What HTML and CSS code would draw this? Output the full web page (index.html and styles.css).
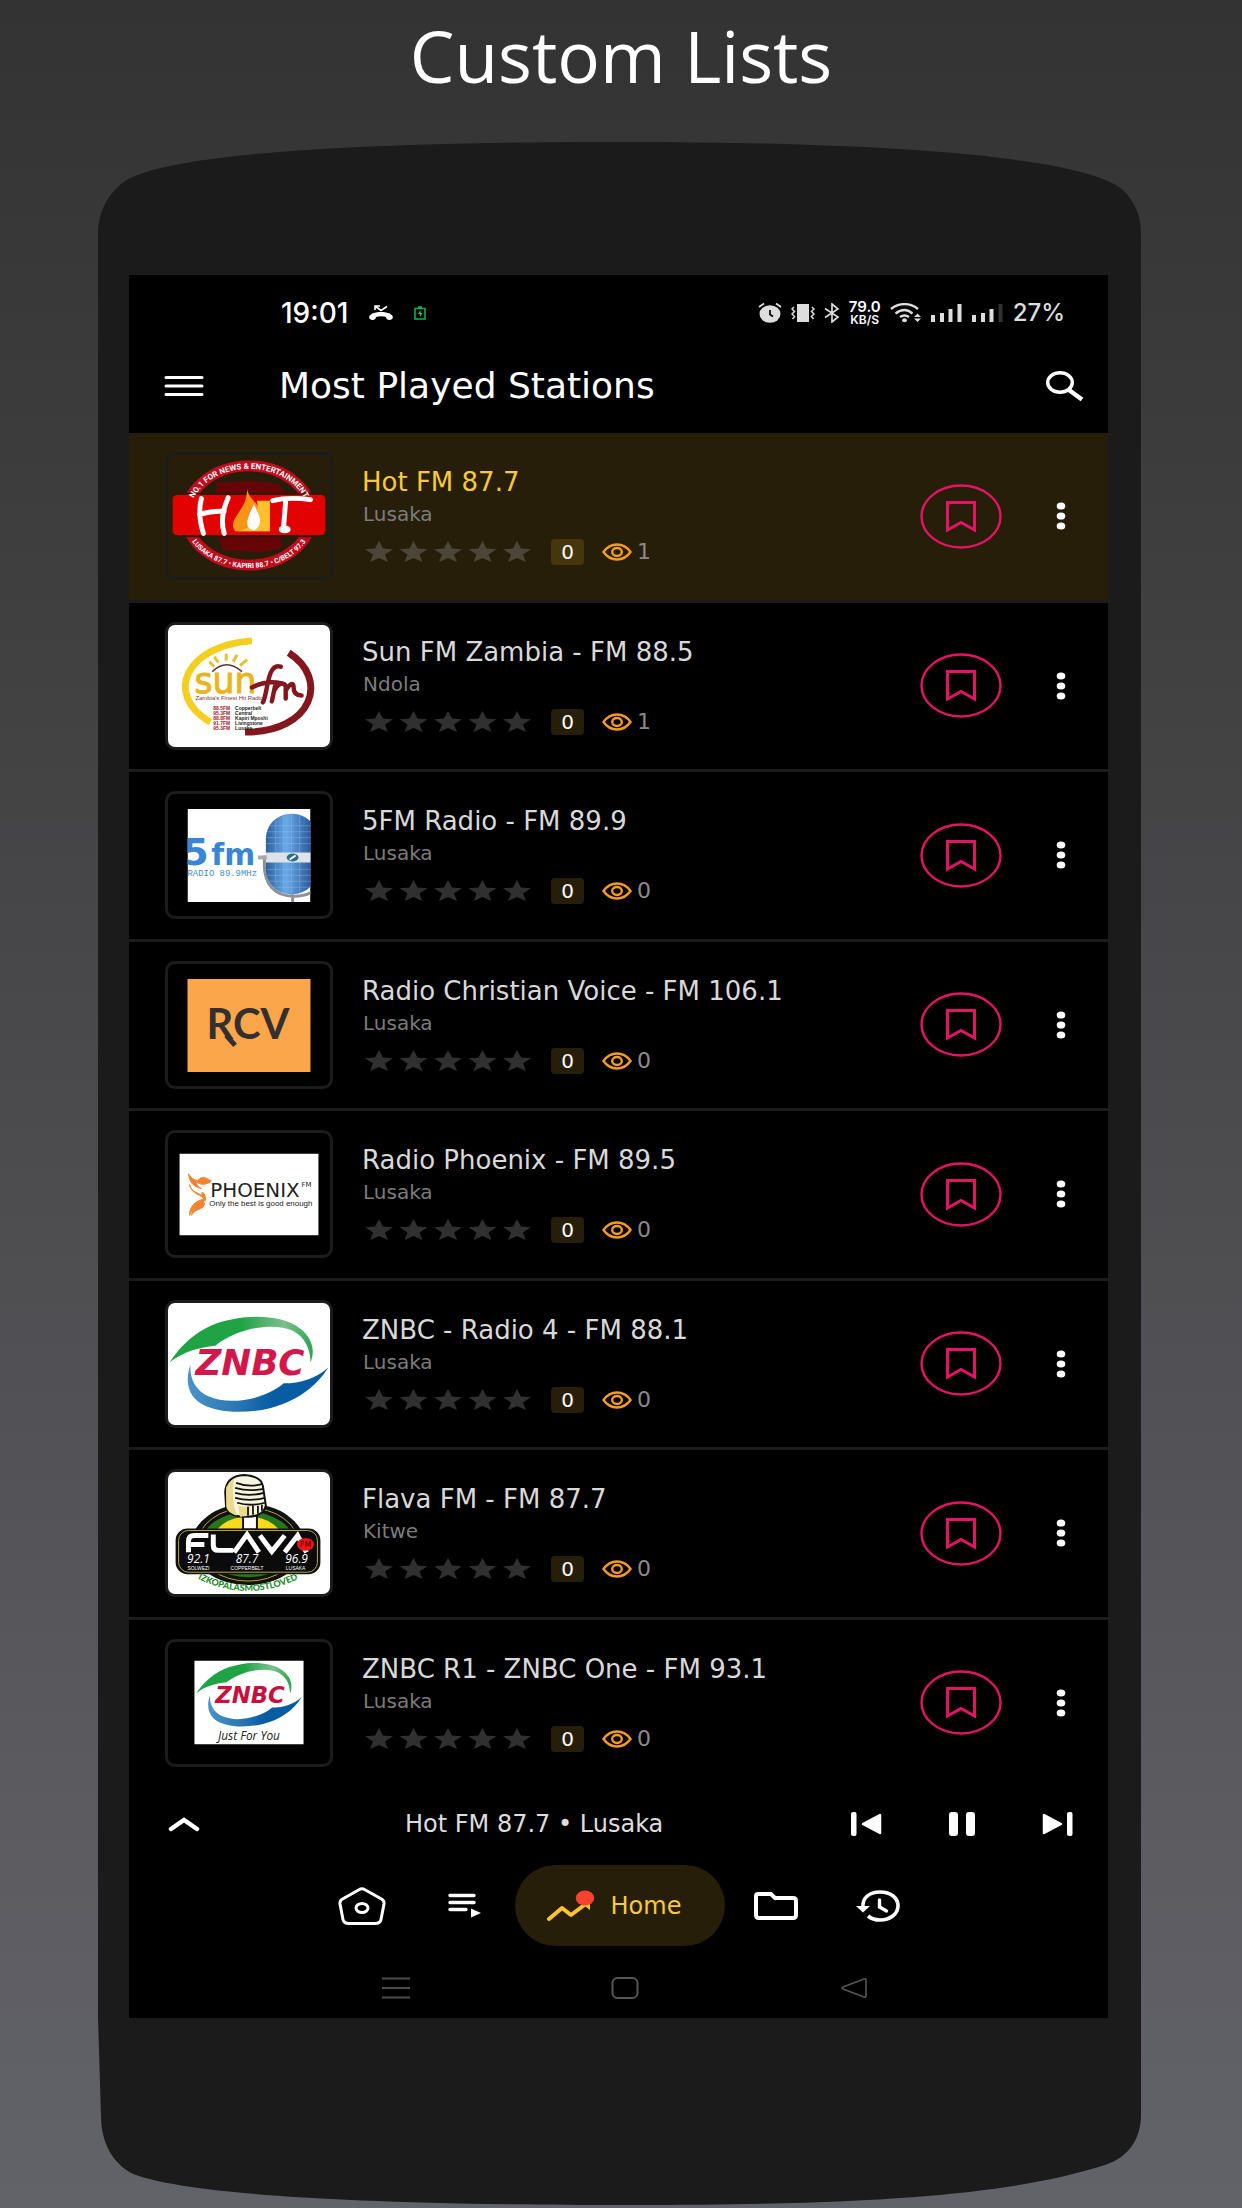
FILE: index.html
```html
<!DOCTYPE html>
<html lang="en">
<head>
<meta charset="utf-8">
<meta name="viewport" content="width=device-width, initial-scale=1">
<title>Custom Lists</title>
<link rel="stylesheet" href="styles.css">
</head>
<body>
<svg class="defs" aria-hidden="true">
  <defs>
    <linearGradient id="leaf"><stop offset=".5" stop-color="#1fa345"/><stop offset=".8" stop-color="#7cc08d"/><stop offset="1" stop-color="#2ca551"/></linearGradient>
    <linearGradient id="wave"><stop offset="0" stop-color="#4b93c8"/><stop offset=".35" stop-color="#2a77b4"/><stop offset=".6" stop-color="#075ca4"/></linearGradient>
  </defs>
  <symbol id="stars" viewBox="0 0 166 22">
    <g fill="currentColor">
      <path id="star" d="M14 0l4 7.500 10 .8-8 5.200 3 7.500-9-4-9 4 3-7.500-8-5.200 10-.8z"/>
      <use href="#star" x="34.500"/><use href="#star" x="69"/><use href="#star" x="103.500"/><use href="#star" x="138"/>
    </g>
  </symbol>
  <symbol id="eye" viewBox="0 0 30 18">
    <g fill="none" stroke="currentColor" stroke-width="2.400">
      <path d="M1.500 9C5 4 9.500 1.500 15 1.500S25 4 28.500 9C25 14 20.500 16.500 15 16.500S5 14 1.500 9z"/>
      <ellipse cx="15" cy="9" rx="4.800" ry="4"/>
    </g>
  </symbol>
  <symbol id="bookmark" viewBox="0 0 82 65">
    <g fill="none" stroke="currentColor" stroke-width="2.400">
      <ellipse cx="41" cy="32.500" rx="39.500" ry="31"/>
      <path d="M27.500 18.500h27v27.500L41 38.500 27.500 46z" stroke-width="3"/>
    </g>
  </symbol>
  <symbol id="more" viewBox="0 0 10 28">
    <g fill="currentColor"><ellipse cx="5" cy="4" rx="4.300" ry="3.600"/><ellipse cx="5" cy="14" rx="4.300" ry="3.600"/><ellipse cx="5" cy="24" rx="4.300" ry="3.600"/></g>
  </symbol>
  <symbol id="swoosh" viewBox="0 0 162 123">
    <path fill="url(#leaf)" d="M1 60C16 37 36 22 62 17 88 11 116 14 130 24 145 34 148 48 143 60 143 46 137 34 125 28 106 19 70 25 47 43 30 45 14 49 1 60z"/>
    <path fill="url(#wave)" d="M161 65C148 86 126 100 102 106 77 112 48 111 32 101 18 92 17 76 22 62 21 76 27 88 40 94 62 104 97 97 116 81 133 81 149 76 161 65z"/>
  </symbol>
</svg>

<main class="promo">
  <h1 class="headline">Custom Lists</h1>

  <div class="phone">
    <svg class="cap" viewBox="0 0 1043 133" preserveAspectRatio="none" aria-hidden="true">
      <path d="M0 134V92C0 72 8 55 22 43 38 28 105 0 522 0s488 34 503 48c12 12 18 26 18 44v42z" fill="#1b1b1b"/>
    </svg>

    <div class="screen">
      <div class="status">
        <div class="status-left">
          <span class="clock">19:01</span>
          <svg width="26" height="16" viewBox="0 0 26 16"><path d="M2 14C-1 11 4 7 13 7s14 4 11 7c-2 2-6 1-6-2-3-1-7-1-10 0 0 3-4 4-6 2z" fill="#fff"/><path d="M7 5V1h5M7 1l6 4.500 6-4" fill="none" stroke="#fff" stroke-width="1.600"/></svg>
          <svg width="12" height="14" viewBox="0 0 12 14"><path d="M1 2.500h10v10.500H1zM4 1h4" fill="none" stroke="#16b34c" stroke-width="1.500"/><path d="M6.500 4L4 8h2v3l2.500-4h-2z" fill="#25d162"/></svg>
        </div>
        <div class="status-right">
          <svg width="24" height="20" viewBox="0 0 24 20"><ellipse cx="12" cy="11" rx="10.500" ry="8.700" fill="#ddd"/><path d="M1 4l5-3.500M23 4l-5-3.500" stroke="#ddd" stroke-width="1.800"/><path d="M12 7v4.500l3 2" fill="none" stroke="#000" stroke-width="1.700"/></svg>
          <svg width="24" height="18" viewBox="0 0 24 18"><path d="M6 0h12v18H6z" fill="#ddd"/><path d="M3 3L1 5l2.500 2.500L1 10l2.500 2.500L1.500 15M21 3l2 2-2.500 2.500L23 10l-2.500 2.500 2 2.500" fill="none" stroke="#ddd" stroke-width="1.500"/></svg>
          <svg width="16" height="20" viewBox="0 0 16 20"><path d="M1 5.500l13 8.500-6 5V1l6 5L1 14.500" fill="none" stroke="#ddd" stroke-width="1.700"/></svg>
          <span class="speed"><span>79.0</span><span class="unit">KB/S</span></span>
          <svg width="32" height="20" viewBox="0 0 32 20"><path d="M1 6C9-.5 20-.5 28 6M5.500 10.500c6-4.500 12-4.500 17 0M10 14c3-2 6-2 9 0" fill="none" stroke="#ddd" stroke-width="2.400"/><ellipse cx="14.500" cy="17.200" rx="2.400" ry="2" fill="#ddd"/><path d="M24 14l3.500-3.500L31 14zM24 15.500h7L27.500 19z" fill="#ddd"/></svg>
          <svg width="32" height="18" viewBox="0 0 32 18"><path d="M0 11h4v7H0zM9 9h4v9H9zM17.500 5h4v13h-4zM26.500 0h4v18h-4z" fill="#ddd"/></svg>
          <svg width="32" height="18" viewBox="0 0 32 18"><path d="M0 11h4v7H0zM9 9h4v9H9zM17.500 5h4v13h-4z" fill="#ddd"/><path d="M26.500 0h4v18h-4z" fill="#333"/></svg>
          <span class="battery">27%</span>
        </div>
      </div>

      <header class="appbar">
        <button class="icon-btn" type="button" aria-label="Menu"><svg width="40" height="22" viewBox="0 0 40 22"><path d="M2 2.500h36M2 11h36M2 19.500h36" stroke="#fff" stroke-width="3" stroke-linecap="round"/></svg></button>
        <h2 class="title">Most Played Stations</h2>
        <button class="icon-btn" type="button" aria-label="Search"><svg width="38" height="30" viewBox="0 0 38 30"><ellipse cx="14" cy="11.500" rx="12.300" ry="9.700" fill="none" stroke="#fff" stroke-width="3.400"/><path d="M23 19l13 9.500" stroke="#fff" stroke-width="4.500"/></svg></button>
      </header>

      <ul class="stations">
        <li class="station active">
          <svg class="thumb" viewBox="0 0 162 123" role="img" aria-label="Hot FM logo">
            <ellipse cx="81" cy="61" rx="63" ry="50" fill="none" stroke="#c10a1c" stroke-width="11"/>
            <path d="M48 28l35-2 28 3 8 11H48zM48 79h64l3 14-20 5-40-2z" fill="#650507"/>
            <rect x="4" y="40" width="154" height="41" rx="5" fill="#e30202"/>
            <path d="M2 39h158M2 82h158" stroke="#281c09" stroke-width="2"/>
            <path d="M33 44q-4 16 2 35M31 60q15-4 25-3M60 43q-9 20-4 36M105 46q16-4 38-1M118 46l-2 25" fill="none" stroke="#fff" stroke-width="5" stroke-linecap="round"/>
            <ellipse cx="117" cy="75" rx="6" ry="4" fill="#fff"/>
            <path d="M79 34c2 12 14 15 14 26l9-12v29H67c-9-13 13-21 12-43z" fill="#f99417"/>
            <path d="M89 46h13v31H67c15 0 26-14 22-31z" fill="#fec02f"/><path d="M86 50c9 16 7 22 0 26-10-2-8-11 0-26z" fill="#fff"/>
            <path id="arcTop" d="M21 61A60 47 0 0 1 141 61" fill="none"/><path id="arcBottom" d="M15 61A66 53 0 0 0 147 61" fill="none"/>
            <text class="logo-cond" font-size="8" fill="#fff"><textPath href="#arcTop" startOffset="50%" text-anchor="middle">NO.1 FOR NEWS &amp; ENTERTAINMENT</textPath></text>
            <text class="logo-cond" font-size="7" fill="#fff"><textPath href="#arcBottom" startOffset="50%" text-anchor="middle">LUSAKA 87.7 • KAPIRI 88.7 • C/BELT 97.3</textPath></text>
          </svg>
          <div class="info">
            <h3 class="name">Hot FM 87.7</h3><p class="city">Lusaka</p>
            <div class="meta"><svg class="stars"><use href="#stars"/></svg><span class="badge">0</span><svg class="eye"><use href="#eye"/></svg><span class="views">1</span></div>
          </div>
          <button class="save" type="button" aria-label="Bookmark"><svg width="82" height="65"><use href="#bookmark"/></svg></button>
          <button class="more" type="button" aria-label="More"><svg width="10" height="28"><use href="#more"/></svg></button>
        </li>

        <li class="station">
          <svg class="thumb light" viewBox="0 0 162 123" role="img" aria-label="Sun FM logo">
            <path d="M84 16C18 20-6 70 42 98" fill="none" stroke="#f4cf22" stroke-width="7"/>
            <path d="M121 28C162 54 146 108 77 108" fill="none" stroke="#84171d" stroke-width="7"/>
            <path d="M44 47q14-14 30 0" fill="none" stroke="#6b3030" stroke-width="1.500"/>
            <path d="M46 42l-5-5M50 38l-4-6M58 36v-7M65 37l4-7M72 41l7-6" stroke="#e8c130" stroke-width="3"/>
            <text class="logo-wide" x="26" y="69" font-size="35" fill="#e8b51d" stroke="#e8b51d">sun</text>
            <path d="M113 42c-14-5-13 28-18 36M84 63q15-8 30-4M108 58l-4 19M107 65c5-8 12-8 11 0v9M118 66c5-8 8-8 8-3s2 8 8 8" fill="none" stroke="#84171d" stroke-width="4.500" stroke-linecap="round"/>
            <text class="logo-sans" x="27" y="76" font-size="6" fill="#7a3040">Zambia's Finest Hit Radio</text>
            <g class="logo-bold" font-size="5" fill="#a01822"><text x="45" y="86">88.5FM</text><text x="45" y="91">95.3FM</text><text x="45" y="96">88.8FM</text><text x="45" y="101">91.7FM</text><text x="45" y="106">95.3FM</text></g>
            <g class="logo-bold" font-size="5" fill="#222"><text x="67" y="86">Copperbelt</text><text x="67" y="91">Central</text><text x="67" y="96">Kapiri Mposhi</text><text x="67" y="101">Livingstone</text><text x="67" y="106">Lusaka</text></g>
          </svg>
          <div class="info">
            <h3 class="name">Sun FM Zambia - FM 88.5</h3><p class="city">Ndola</p>
            <div class="meta"><svg class="stars"><use href="#stars"/></svg><span class="badge">0</span><svg class="eye"><use href="#eye"/></svg><span class="views">1</span></div>
          </div>
          <button class="save" type="button" aria-label="Bookmark"><svg width="82" height="65"><use href="#bookmark"/></svg></button>
          <button class="more" type="button" aria-label="More"><svg width="10" height="28"><use href="#more"/></svg></button>
        </li>

        <li class="station">
          <svg class="thumb" viewBox="0 0 162 123" role="img" aria-label="5FM logo">
            <defs><linearGradient id="mic"><stop offset="0" stop-color="#2c5f9d"/><stop offset=".4" stop-color="#6aa9e8"/><stop offset="1" stop-color="#1a4586"/></linearGradient><clipPath id="micClip"><path d="M19 15h124v94H19z"/></clipPath></defs>
            <g clip-path="url(#micClip)">
              <path d="M19 15h124v94H19z" fill="#fff"/>
              <path d="M97 62c-4 32 13 41 29 41s24-6 26-16M125 101v10" fill="none" stroke="#8d9299" stroke-width="3"/>
              <rect x="98" y="20" width="52" height="81" rx="25" fill="url(#mic)"/>
              <path d="M100 32h48M99 38h50M98 44h50M98 50h50M98 76h50M99 82h50M101 88h46M105 94h40M108 27v65M116 22v77M124 20v80M132 22v77" stroke="#9cc7f1" stroke-width=".7" opacity=".5"/>
              <path d="M98 59h46v10H98z" fill="#dfe3e8"/><path d="M90 62h9v4h-9z" fill="#aaa"/><ellipse cx="125" cy="64" rx="6" ry="4" fill="#2a6b92"/><path d="M122 66l6-4" stroke="#fff" stroke-width="2"/>
              <text class="logo-wide-bold" x="14" y="72" font-size="38" fill="#3a86d6">5</text>
              <text class="logo-wide-bold" x="43" y="72" font-size="30" fill="#3a86d6">fm</text>
              <text class="logo-mono" x="19" y="83" font-size="9" fill="#3f8bc8">RADIO 89.9MHz</text>
            </g>
          </svg>
          <div class="info">
            <h3 class="name">5FM Radio - FM 89.9</h3><p class="city">Lusaka</p>
            <div class="meta"><svg class="stars"><use href="#stars"/></svg><span class="badge">0</span><svg class="eye"><use href="#eye"/></svg><span class="views">0</span></div>
          </div>
          <button class="save" type="button" aria-label="Bookmark"><svg width="82" height="65"><use href="#bookmark"/></svg></button>
          <button class="more" type="button" aria-label="More"><svg width="10" height="28"><use href="#more"/></svg></button>
        </li>

        <li class="station">
          <svg class="thumb" viewBox="0 0 162 123" role="img" aria-label="RCV logo">
            <path d="M19 15h124v94H19z" fill="#fba64a"/>
            <text class="logo-lato" x="80" y="76" font-size="42" fill="#35302f" text-anchor="middle">RCV</text>
            <path d="M58 72l9 10" stroke="#35302f" stroke-width="5"/>
          </svg>
          <div class="info">
            <h3 class="name">Radio Christian Voice - FM 106.1</h3><p class="city">Lusaka</p>
            <div class="meta"><svg class="stars"><use href="#stars"/></svg><span class="badge">0</span><svg class="eye"><use href="#eye"/></svg><span class="views">0</span></div>
          </div>
          <button class="save" type="button" aria-label="Bookmark"><svg width="82" height="65"><use href="#bookmark"/></svg></button>
          <button class="more" type="button" aria-label="More"><svg width="10" height="28"><use href="#more"/></svg></button>
        </li>

        <li class="station">
          <svg class="thumb" viewBox="0 0 162 123" role="img" aria-label="Radio Phoenix logo">
            <path d="M11 21h140v82H11z" fill="#fff"/>
            <path d="M20 41c1 9 5 13 13 15-4-2-5-4-5-7 4 5 14 2 15-1-6-2-8-6-14 0-4-1-7-3-9-7zM21 52c2 8 9 8 14 12-5-7 3-5 2 4-3-6-14-6-16-16zM37 66c-3 9-13 7-16 17 0-9 6-15 16-17zM36 70c1 8-9 5-13 13 1-7 6-11 13-13z" fill="#f08430" stroke="#f08430"/>
            <text class="logo-wide" x="42" y="65" font-size="20" fill="#222">PHOENIX</text>
            <text class="logo-wide" x="134" y="54" font-size="7" fill="#222">FM</text>
            <text class="logo-sans" x="41" y="74" font-size="8" fill="#222">Only the best is good enough</text>
          </svg>
          <div class="info">
            <h3 class="name">Radio Phoenix - FM 89.5</h3><p class="city">Lusaka</p>
            <div class="meta"><svg class="stars"><use href="#stars"/></svg><span class="badge">0</span><svg class="eye"><use href="#eye"/></svg><span class="views">0</span></div>
          </div>
          <button class="save" type="button" aria-label="Bookmark"><svg width="82" height="65"><use href="#bookmark"/></svg></button>
          <button class="more" type="button" aria-label="More"><svg width="10" height="28"><use href="#more"/></svg></button>
        </li>

        <li class="station">
          <svg class="thumb light" viewBox="0 0 162 123" role="img" aria-label="ZNBC logo">
            <use href="#swoosh" width="162" height="123"/>
            <text class="logo-znbc" x="82" y="73" font-size="36" fill="#d3174a" text-anchor="middle">ZNBC</text>
          </svg>
          <div class="info">
            <h3 class="name">ZNBC - Radio 4 - FM 88.1</h3><p class="city">Lusaka</p>
            <div class="meta"><svg class="stars"><use href="#stars"/></svg><span class="badge">0</span><svg class="eye"><use href="#eye"/></svg><span class="views">0</span></div>
          </div>
          <button class="save" type="button" aria-label="Bookmark"><svg width="82" height="65"><use href="#bookmark"/></svg></button>
          <button class="more" type="button" aria-label="More"><svg width="10" height="28"><use href="#more"/></svg></button>
        </li>

        <li class="station">
          <svg class="thumb light" viewBox="0 0 162 123" role="img" aria-label="Flava FM logo">
            <ellipse cx="80" cy="73" rx="57" ry="41" fill="#111"/><ellipse cx="80" cy="73" rx="51" ry="37" fill="none" stroke="#b4a83a"/>
            <ellipse cx="80" cy="73" rx="47" ry="33" fill="#27781d"/><ellipse cx="80" cy="71" rx="36" ry="26" fill="#fbd81c"/>
            <path d="M75 44h14v14H75z" fill="#fff" stroke="#111" stroke-width="2"/>
            <path d="M57 20Q58 4 76 3q17 1 19 11l3 20q-3 11-18 11-17 1-22-8z" fill="#f7f4dd" stroke="#111" stroke-width="2"/>
            <path d="M58 15l8-9q-4 20 3 38-9-2-11-9zM70 34q8 2 12 0l-1 10-9 1z" fill="#ecd98a"/>
            <path d="M68 11q13 5 27 1M67 16q14 4 29 1M67 21q14 4 29 0M67 26q15 4 30 0M69 31q14 4 28 0M80 35v9M85 34v9M90 34v8M94 33v6" fill="none" stroke="#111" stroke-width="1.800"/>
            <rect x="8" y="58" width="144" height="44" rx="11" fill="#0b0b0b" stroke="#111" stroke-width="2"/><rect x="10" y="59" width="140" height="42" rx="10" fill="none" stroke="#b4a83a"/>
            <g fill="none" stroke="#fff" stroke-width="5"><path d="M20 81V70q0-6 6-6h14M20 73h16M45 63v11q0 5 5 5h15M66 81l13-18 12 18M92 64l12 16 13-16M117 81l13-17 9 17"/></g>
            <ellipse cx="138" cy="73" rx="8.500" ry="6.500" fill="#ee1515"/><text class="logo-wide" x="138" y="76" font-size="8" fill="#400" text-anchor="middle">FM</text>
            <g class="logo-italic" font-size="12" fill="#fff" text-anchor="middle"><text x="30" y="92">92.1</text><text x="79" y="92">87.7</text><text x="129" y="92">96.9</text></g>
            <g class="logo-sans" font-size="5" fill="#fff" text-anchor="middle"><text x="30" y="99">SOLWEZI</text><text x="79" y="99">COPPERBELT</text><text x="128" y="99">LUSAKA</text></g>
            <path id="arcFlava" d="M30 108Q80 132 130 108" fill="none"/><text class="logo-black" font-size="9" fill="#1d8a2b"><textPath href="#arcFlava" startOffset="50%" text-anchor="middle">IZKOPALASMOSTLOVED</textPath></text>
          </svg>
          <div class="info">
            <h3 class="name">Flava FM - FM 87.7</h3><p class="city">Kitwe</p>
            <div class="meta"><svg class="stars"><use href="#stars"/></svg><span class="badge">0</span><svg class="eye"><use href="#eye"/></svg><span class="views">0</span></div>
          </div>
          <button class="save" type="button" aria-label="Bookmark"><svg width="82" height="65"><use href="#bookmark"/></svg></button>
          <button class="more" type="button" aria-label="More"><svg width="10" height="28"><use href="#more"/></svg></button>
        </li>

        <li class="station">
          <svg class="thumb" viewBox="0 0 162 123" role="img" aria-label="ZNBC Radio 1 logo">
            <path d="M26 19h110v84H26z" fill="#fff"/>
            <use href="#swoosh" x="27" y="12" width="108" height="82"/>
            <text class="logo-znbc" x="82" y="62" font-size="23" fill="#c8103c" text-anchor="middle">ZNBC</text>
            <text class="logo-italic" x="81" y="99" font-size="12" fill="#222" text-anchor="middle">Just For You</text>
          </svg>
          <div class="info">
            <h3 class="name">ZNBC R1 - ZNBC One - FM 93.1</h3><p class="city">Lusaka</p>
            <div class="meta"><svg class="stars"><use href="#stars"/></svg><span class="badge">0</span><svg class="eye"><use href="#eye"/></svg><span class="views">0</span></div>
          </div>
          <button class="save" type="button" aria-label="Bookmark"><svg width="82" height="65"><use href="#bookmark"/></svg></button>
          <button class="more" type="button" aria-label="More"><svg width="10" height="28"><use href="#more"/></svg></button>
        </li>
      </ul>

      <section class="player" aria-label="Now playing">
        <button class="icon-btn" type="button" aria-label="Expand player"><svg width="32" height="16" viewBox="0 0 32 16"><path d="M3 13L16 4l13 9" fill="none" stroke="#fff" stroke-width="4.500" stroke-linecap="round"/></svg></button>
        <p class="now">Hot FM 87.7 • Lusaka</p>
        <div class="controls">
          <button class="icon-btn" type="button" aria-label="Previous"><svg width="32" height="24" viewBox="0 0 32 24"><rect width="5.500" height="24" rx="2" fill="#fff"/><path d="M12 12L29 3v18z" fill="#fff" stroke="#fff" stroke-width="2.500" stroke-linejoin="round"/></svg></button>
          <button class="icon-btn" type="button" aria-label="Pause"><svg width="26" height="24" viewBox="0 0 26 24"><rect width="9" height="24" rx="3" fill="#fff"/><rect x="17" width="9" height="24" rx="3" fill="#fff"/></svg></button>
          <button class="icon-btn" type="button" aria-label="Next"><svg width="32" height="24" viewBox="0 0 32 24"><rect x="26" width="5.500" height="24" rx="2" fill="#fff"/><path d="M20 12L3 3v18z" fill="#fff" stroke="#fff" stroke-width="2.500" stroke-linejoin="round"/></svg></button>
        </div>
      </section>

      <nav class="tabs" aria-label="Sections">
        <a class="tab" href="#stations" aria-label="Stations"><svg width="48" height="38" viewBox="0 0 48 38"><path d="M21 2.800q3-2 6 0L43.500 12q3 1.800 2.500 5l-3 15.500q-.8 4-6 4H11q-5.200 0-6-4L2 17q-.5-3.200 2.500-5z" fill="none" stroke="#fff" stroke-width="3"/><ellipse cx="24" cy="21" rx="6" ry="4.500" fill="none" stroke="#fff" stroke-width="3"/></svg></a>
        <a class="tab" href="#playlist" aria-label="Playlist"><svg width="33" height="25" viewBox="0 0 33 25"><path d="M2 2.500h24M2 9.500h24M2 16.500h16" stroke="#fff" stroke-width="3.400" stroke-linecap="round"/><path d="M23 15.500v9l10-4.500z" fill="#fff"/></svg></a>
        <a class="tab current" href="#home"><svg width="48" height="32" viewBox="0 0 48 32"><path d="M2 29L15 18l9 7 16-12" fill="none" stroke="#fdc52b" stroke-width="4" stroke-linecap="round" stroke-linejoin="round"/><path d="M34 13h9v7z" fill="#fdc52b"/><ellipse cx="38" cy="8" rx="9.300" ry="7.500" fill="#f6432f"/></svg><span>Home</span></a>
        <a class="tab" href="#folders" aria-label="Folders"><svg width="44" height="28" viewBox="0 0 44 28"><path d="M4 2h13l4 4h18q3 0 3 3v14q0 3-3 3H5q-3 0-3-3V4q0-2 2-2z" fill="none" stroke="#fff" stroke-width="4"/></svg></a>
        <a class="tab" href="#history" aria-label="History"><svg width="44" height="32" viewBox="0 0 44 32"><path d="M7 18C6 8 13 2 24 2s18 6 18 14-8 14-18 14c-5 0-9-1.500-12-4" fill="none" stroke="#fff" stroke-width="3.600"/><path d="M0 16h14l-7 6.500z" fill="#fff"/><path d="M23.500 10v7l7 4" fill="none" stroke="#fff" stroke-width="3.400" stroke-linecap="round"/></svg></a>
      </nav>

      <div class="system">
        <button type="button" aria-label="Recent apps"><svg width="28" height="22" viewBox="0 0 28 22"><path d="M0 1.500h28M0 11h28M0 20.500h28" stroke="#4c4c4c" stroke-width="2"/></svg></button>
        <button type="button" aria-label="Home screen"><svg width="28" height="22" viewBox="0 0 28 22"><rect x="1.500" y="1" width="25" height="20" rx="5" fill="none" stroke="#565656" stroke-width="2"/></svg></button>
        <button type="button" aria-label="Back"><svg width="28" height="22" viewBox="0 0 28 22"><path d="M3 10q-2 1 0 2l21 8q2 .6 2-1V3q0-1.600-2-1z" fill="none" stroke="#565656" stroke-width="1.600"/></svg></button>
      </div>
    </div>

    <svg class="cap foot" viewBox="0 0 1043 187" preserveAspectRatio="none" aria-hidden="true">
      <path d="M0 0L3 98c0 26 11 46 30 57 40 17 170 32 500 32 280 0 390-14 474-40 25-8 36-28 36-50V0z" fill="#1b1b1b"/>
    </svg>
  </div>
</main>
</body>
</html>
```
FILE: styles.css
```css
* { box-sizing: border-box; margin: 0; padding: 0; }

body {
  min-height: 100vh;
  background: linear-gradient(#333 0%, #3d3d3d 22%, #4c4c4f 52%, #5b5b60 82%, #626369 100%);
  color: #fff;
  font-family: "DejaVu Sans", sans-serif;
}

svg { display: block; flex: none; }
button { display: flex; align-items: center; justify-content: center; background: none; border: 0; color: inherit; }
a { color: inherit; text-decoration: none; }
.defs { width: 0; height: 0; overflow: hidden; float: left; }

.promo { padding: 0 101px 3px 98px; }

.headline {
  height: 142px;
  padding: 6px 0 0 3px;
  font: 400 71px/100px "Open Sans", sans-serif;
  text-align: center;
}

.phone { display: flex; flex-direction: column; }
.cap { width: 100%; height: 133px; overflow: visible; }
.foot { height: 187px; }

.screen {
  background: #000;
  border: solid #1b1b1b;
  border-width: 0 33px 0 31px;
}

.status { display: flex; justify-content: space-between; height: 76px; padding: 0 43px 0 152px; align-items: center; }
.status-left, .status-right { display: flex; align-items: center; }
.status-left { gap: 20px; }
.status-right { gap: 9px; color: #ddd; }
.clock { font: 500 28px/28px "Inter", sans-serif; }
.battery { font: 500 24px/28px "Inter", sans-serif; }
.speed { display: flex; flex-direction: column; align-items: center; font: 600 15px/13px "Inter", sans-serif; color: #fff; }
.unit { font-size: 12px; }

.appbar { display: flex; align-items: center; height: 82px; padding: 0 24px 12px 35px; }
.title { flex: 1; padding-left: 75px; font-size: 36px; font-weight: 400; line-height: 40px; }

.stations { display: grid; grid-auto-rows: 1fr; min-height: 1356px; list-style: none; }
.station { display: flex; align-items: center; padding: 0 27px 0 36px; border-bottom: 3px solid #1b1b1b; color: #d9d9d9; }
.station:last-child { border-color: #000; }
.station.active { background: #271e0a; }
.thumb { width: 168px; height: 128px; border: 3px solid #1c1c1c; border-radius: 10px; }
.thumb.light { background: #fff; }
.info { flex: 1; padding: 8px 0 0 29px; }
.name { font-size: 26px; font-weight: 400; line-height: 32px; white-space: nowrap; }
.active .name { color: #f8c935; }
.city { padding-left: 1px; font-size: 20px; line-height: 32px; color: #7c7c7c; }
.meta { display: flex; align-items: center; height: 44px; padding-left: 3px; }
.stars { width: 166px; height: 22px; color: #303030; }
.active .stars { color: #4c4538; }
.badge { width: 33px; margin: 0 18px 0 20px; border-radius: 4px; background: #271e0a; color: #fff; font-size: 20px; line-height: 26px; text-align: center; }
.active .badge { background: #46360c; }
.eye { width: 30px; height: 18px; color: #f59b20; }
.views { padding-left: 5px; font-size: 22px; line-height: 26px; color: #8a8a8a; }
.save { color: #e21466; }
.more { width: 40px; height: 64px; margin-left: 39px; color: #fff; }

.logo-cond { font-family: "Liberation Sans Narrow", "Roboto", sans-serif; font-weight: 700; }
.logo-wide { font-family: "DejaVu Sans", sans-serif; }
.logo-wide-bold { font-family: "DejaVu Sans", sans-serif; font-weight: 700; }
.logo-sans { font-family: "Liberation Sans", sans-serif; }
.logo-bold { font-family: "Liberation Sans", sans-serif; font-weight: 700; }
.logo-mono { font-family: "Liberation Mono", monospace; }
.logo-lato { font-family: "Lato", sans-serif; font-weight: 700; }
.logo-znbc { font-family: "DejaVu Sans", sans-serif; font-weight: 700; font-style: italic; }
.logo-italic { font-family: "Open Sans", sans-serif; font-style: italic; }
.logo-black { font-family: "Lato", sans-serif; font-weight: 900; }

.player { display: flex; align-items: center; height: 69px; padding: 0 35px 0 39px; }
.now { flex: 1; padding-left: 205px; font-size: 24px; line-height: 30px; color: #ddd; white-space: nowrap; }
.controls { display: flex; gap: 66px; }

.tabs { display: flex; justify-content: center; height: 100px; padding: 7px 0 12px 3px; }
.tab { display: flex; align-items: center; justify-content: center; width: 102px; }
.tab.current { width: 210px; gap: 16px; padding-right: 12px; border-radius: 41px; background: #271e0a; color: #f8c935; font-size: 24px; }

.system { display: flex; justify-content: center; height: 60px; padding-left: 12px; }
.system button { width: 229px; }
```
